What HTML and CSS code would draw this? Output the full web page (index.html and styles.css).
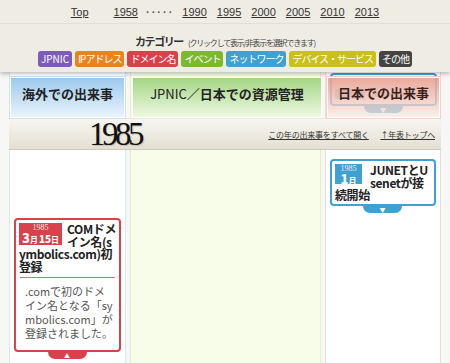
FILE: index.html
```html
<!DOCTYPE html>
<html lang="ja">
<head>
    <meta charset="UTF-8">
    <title>インターネット歴史年表 1985</title>
    <link rel="stylesheet" href="styles.css">
</head>
<body>

    <!-- 年の切り替えとカテゴリー -->
    <header class="masthead">
        <nav class="years">
            <a class="top-link" href="#">Top</a>
            <a href="#">1958</a>
            <span class="dots">·····</span>
            <a href="#">1990</a>
            <a href="#">1995</a>
            <a href="#">2000</a>
            <a href="#">2005</a>
            <a href="#">2010</a>
            <a href="#">2013</a>
        </nav>
        <div class="categories">
            <p class="cat-title"><strong>カテゴリー</strong><small>(クリックして表示/非表示を選択できます)</small></p>
            <ul class="cat-list">
                <li class="cat cat-jpnic">JPNIC</li>
                <li class="cat cat-ip">IPアドレス</li>
                <li class="cat cat-domain">ドメイン名</li>
                <li class="cat cat-event">イベント</li>
                <li class="cat cat-network">ネットワーク</li>
                <li class="cat cat-device">デバイス・サービス</li>
                <li class="cat cat-other">その他</li>
            </ul>
        </div>
    </header>

    <main class="timeline">
        <!-- 列見出し -->
        <div class="col col-world">
            <h2 class="col-head">海外での出来事</h2>
        </div>
        <div class="col col-jpnic">
            <h2 class="col-head"><span class="latin">JPNIC</span>／日本での資源管理</h2>
        </div>
        <div class="col col-japan">
            <!-- 前の年の出来事が見出しの下に隠れている -->
            <div class="event event-network ghost">
                <span class="ghost-date"></span>
                <span class="ghost-line"></span>
                <span class="event-tab">▼</span>
            </div>
            <h2 class="col-head">日本での出来事</h2>
        </div>

        <!-- 年の帯 -->
        <div class="year-band">
            <span class="year">1985</span>
            <span class="year-links">
                <a href="#">この年の出来事をすべて開く</a>
                <a href="#">↑年表トップへ</a>
            </span>
        </div>

        <!-- 出来事 -->
        <div class="col col-world">
            <div class="event event-domain" style="margin-top: 68px">
                <div class="event-head">
                    <span class="date"><span class="y">1985</span><span class="md"><b>3</b>月<b class="d">15</b>日</span></span>COMドメ<br>イン名(s<br>ymbolics.com)初<br>登録
                </div>
                <div class="event-body">.comで初のドメイン名となる「symbolics.com」が登録されました。</div>
                <span class="event-tab">▲</span>
            </div>
        </div>
        <div class="col col-jpnic"></div>
        <div class="col col-japan">
            <div class="event event-network" style="margin-top: 9px">
                <div class="event-head">
                    <span class="date date-short"><span class="y">1985</span><span class="md"><b>1</b>月</span></span>JUNETとU<br>senetが接<br>続開始
                </div>
                <span class="event-tab">▼</span>
            </div>
        </div>
    </main>

</body>
</html>
```

FILE: styles.css
```css
body {
    margin: 0;
    background-color: #f7f7f5;
    color: #222;
    font-family: "Noto Sans CJK JP", "Noto Sans", sans-serif;
    height: 363px;
    overflow: hidden;
}

a {
    color: #333;
}

/* 上部 */
.masthead {
    position: relative;
    z-index: 2;
    background-color: #efede3;
    box-shadow: 0 2px 4px rgba(0, 0, 0, 0.25);
}

.years {
    display: flex;
    justify-content: center;
    align-items: center;
    height: 23px;
    border-bottom: 1px solid #e2dfd3;
    font-family: "Liberation Sans", Arial, sans-serif;
    font-size: 11px;
}

.years a {
    margin: 0 5px;
}

.years .top-link {
    margin-right: 20px;
}

.dots {
    color: #555;
    letter-spacing: 2px;
    margin: 0 3px;
    font-weight: bold;
}

.categories {
    padding: 8px 0 5px;
    text-align: center;
}

.cat-title {
    margin: 0;
    height: 14px;
    line-height: 14px;
}

.cat-title strong {
    font-size: 11px;
    letter-spacing: -1.4px;
    color: #333;
}

.cat-title small {
    font-size: 8px;
    letter-spacing: -1.2px;
    color: #444;
    margin-left: 5px;
}

.cat-list {
    list-style: none;
    margin: 5px 0 0;
    padding: 0;
    display: flex;
    justify-content: center;
    gap: 3px;
}

.cat {
    height: 16px;
    line-height: 16px;
    padding: 0 3px;
    border-radius: 3px;
    color: #fff;
    font-size: 10px;
    letter-spacing: -1px;
}

.cat-jpnic { background-color: #7b5cb8; letter-spacing: 0; }
.cat-ip { background-color: #e8841e; }
.cat-domain { background-color: #d9414b; }
.cat-event { background-color: #7cb92f; }
.cat-network { background-color: #3fa0d2; }
.cat-device { background-color: #c9c01c; }
.cat-other { background-color: #444; }

/* 年表 */
.timeline {
    display: grid;
    grid-template-columns: 117px 191px 116px;
    grid-template-rows: 46px 32px 1fr;
    column-gap: 4px;
    margin-left: 9px;
    width: 432px;
    height: 291px;
}

.col {
    position: relative;
    border-left: 1px solid;
    border-right: 1px solid;
}

.col-world {
    background-color: #fff;
    border-color: #d7e8f6;
}

.col-jpnic {
    background-color: #f8fde9;
    border-color: #e3f1c9;
}

.col-japan {
    background-color: #fff;
    border-color: #f6d8d8;
}

.col-head {
    position: relative;
    z-index: 1;
    margin: 5px 0 0;
    height: 39px;
    line-height: 31px;
    text-align: center;
    font-size: 13px;
    font-weight: bold;
    color: #222;
    border: 1px solid #fff;
}

.col-world .col-head {
    background: linear-gradient(#9ccaed, #e9f3fc);
    box-shadow: 0 0 0 1px #cfe3f3;
}

.col-jpnic .col-head {
    margin-left: 1px;
    margin-right: -2px;
    background: linear-gradient(#a4d683, #eef8e2);
}

.col-jpnic .latin {
    font-weight: normal;
}

.col-japan .col-head {
    margin-left: 1px;
    margin-right: 0;
    line-height: 29px;
    background: linear-gradient(rgba(232, 160, 145, 0.9), rgba(250, 232, 226, 0.7));
    box-shadow: 0 0 0 1px #f3d2cb;
    color: #3a1f1a;
}

.year-band {
    grid-column: 1 / -1;
    display: flex;
    align-items: center;
    background: linear-gradient(#f8f6f1, #e3dfd2);
    border-top: 1px solid #ebe8df;
    border-bottom: 1px solid #cdc8b8;
    box-sizing: border-box;
}

.year {
    margin-left: 80px;
    font-family: "Liberation Serif", "Times New Roman", serif;
    font-size: 33px;
    letter-spacing: -3.5px;
    color: #111;
    text-shadow: 1px 1px 1px rgba(0, 0, 0, 0.15);
}

.year-links {
    margin-left: auto;
    margin-right: 6px;
    font-size: 8px;
    letter-spacing: -0.2px;
}

.year-links a + a {
    margin-left: 10px;
}

/* 出来事カード */
.event {
    position: relative;
    margin: 0 4px;
    background-color: #fff;
    border: 2px solid var(--c);
    border-radius: 4px;
}

.event-domain { --c: #d9414b; }
.event-network { --c: #3fa0d2; }

.event-head {
    padding: 3px 2px 2px 3px;
    font-size: 12px;
    line-height: 12.5px;
    letter-spacing: -0.4px;
    font-weight: bold;
    color: #222;
    overflow: hidden;
}

.date {
    float: left;
    min-width: 21px;
    height: 22px;
    padding: 0 3px;
    margin: 0 5px 1px 0;
    background-color: var(--c);
    color: #fff;
    text-align: center;
    letter-spacing: 0;
}

.date-short {
    height: 20px;
    margin-right: 8px;
}

.date .y {
    display: block;
    padding-top: 1px;
    font-family: "Liberation Serif", serif;
    font-size: 8px;
    line-height: 8px;
    font-weight: normal;
    color: #fde9e9;
}

.date .md {
    display: block;
    font-size: 8px;
    line-height: 12px;
}

.date .md b {
    font-size: 13px;
}

.date .md b.d {
    font-size: 10px;
    margin-left: 1px;
}

.event-body {
    margin: 2px 4px 0;
    padding: 6px 1px 10px 5px;
    border-top: 1px solid #e26a72;
    font-size: 11px;
    line-height: 14px;
    color: #555;
    word-break: break-all;
}

.event-tab {
    position: absolute;
    left: 50%;
    bottom: -9px;
    width: 39px;
    height: 7px;
    margin-left: -20px;
    background-color: var(--c);
    border-radius: 0 0 7px 7px;
    color: #fff;
    font-size: 6px;
    line-height: 7px;
    text-align: center;
}

.ghost {
    position: absolute;
    top: 1px;
    left: 4px;
    right: 3px;
    height: 29px;
    margin: 0;
}

.ghost-date {
    position: absolute;
    left: 3px;
    top: 14px;
    width: 30px;
    height: 10px;
    background-color: #8fc6e4;
}

.ghost-line {
    position: absolute;
    left: 40px;
    top: 17px;
    width: 50px;
    height: 5px;
    background-color: #c9c9c9;
}
```
